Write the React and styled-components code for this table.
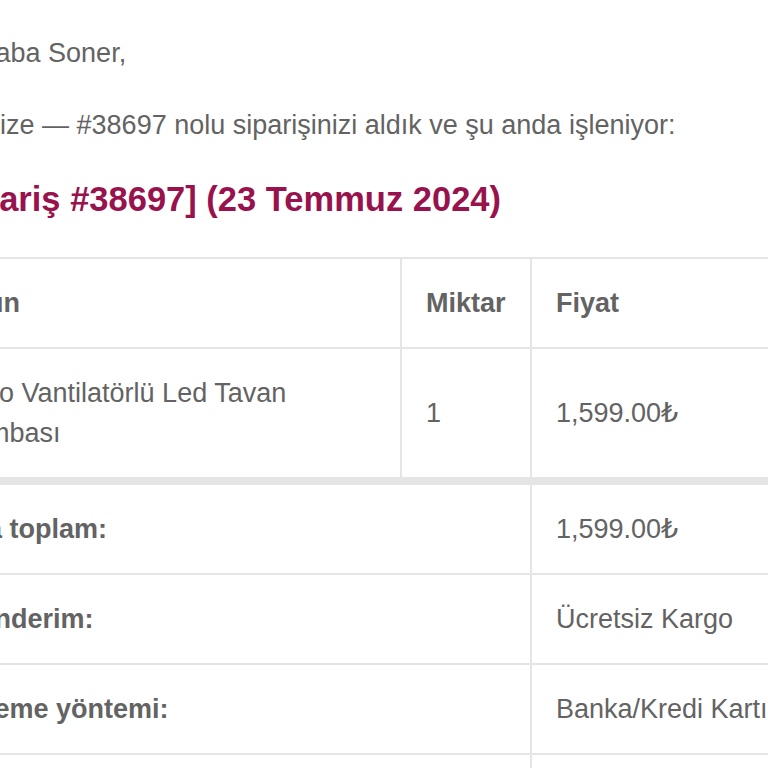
import React from 'react'
import styled, { createGlobalStyle } from 'styled-components'

const GlobalStyle = createGlobalStyle`
  html, body {
    margin: 0;
    padding: 0;
    background: #ffffff;
    overflow: hidden;
  }
`

const order = {
  customer: 'Soner',
  number: '38697',
  date: '23 Temmuz 2024',
  items: [
    { name: 'Aero Vantilatörlü Led Tavan Lambası', qty: 1, price: '1,599.00₺' }
  ],
  totals: [
    { label: 'Ara toplam:', value: '1,599.00₺' },
    { label: 'Gönderim:', value: 'Ücretsiz Kargo' },
    { label: 'Ödeme yöntemi:', value: 'Banka/Kredi Kartı' },
    { label: 'Toplam:', value: '1,599.00₺' }
  ]
}

const App = () => {
  return (
    <>
      <GlobalStyle />
      <EmailBody>
        <Para>Merhaba {order.customer},</Para>
        <Para>Bilginize — #{order.number} nolu siparişinizi aldık ve şu anda işleniyor:</Para>
        <Heading>[Sipariş #{order.number}] ({order.date})</Heading>

        <OrderTable>
          <colgroup>
            <col style={{ width: 469 }} />
            <col style={{ width: 130 }} />
            <col style={{ width: 370 }} />
          </colgroup>
          <thead>
            <tr>
              <HeadCell>Ürün</HeadCell>
              <HeadCell>Miktar</HeadCell>
              <HeadCell>Fiyat</HeadCell>
            </tr>
          </thead>
          <tbody>
            {order.items.map((item) => (
              <tr key={item.name}>
                <Cell>{item.name}</Cell>
                <Cell>{item.qty}</Cell>
                <Cell>{item.price}</Cell>
              </tr>
            ))}
          </tbody>
          <tfoot>
            {order.totals.map((row, i) => (
              <tr key={row.label}>
                <HeadCell colSpan={2} $first={i === 0}>{row.label}</HeadCell>
                <Cell $first={i === 0}>{row.value}</Cell>
              </tr>
            ))}
          </tfoot>
        </OrderTable>
      </EmailBody>
    </>
  )
}

const EmailBody = styled.div`
  padding-top: 33px;
  margin-left: -66px;
  width: 968px;
  font-family: "Liberation Sans", Arial, "DejaVu Sans", sans-serif;
  color: #636363;
  font-size: 27px;
  line-height: 40px;
`

const Para = styled.p`
  margin: 0 0 32px;
`

const Heading = styled.h2`
  margin: 0 0 35px;
  color: #98134e;
  font-size: 34.5px;
  line-height: 45px;
  font-weight: 700;
`

const OrderTable = styled.table`
  width: 969px;
  margin-left: -3px;
  table-layout: fixed;
  border-collapse: collapse;
  border: 2px solid #e5e5e5;
`

const HeadCell = styled.th`
  text-align: left;
  font-weight: 700;
  padding: 24px;
  border: 2px solid #e5e5e5;
  border-top-width: ${(p) => (p.$first ? '8px' : '2px')};
  vertical-align: middle;
`

const Cell = styled.td`
  text-align: left;
  padding: 24px;
  border: 2px solid #e5e5e5;
  border-top-width: ${(p) => (p.$first ? '8px' : '2px')};
  vertical-align: middle;
`

export default App
